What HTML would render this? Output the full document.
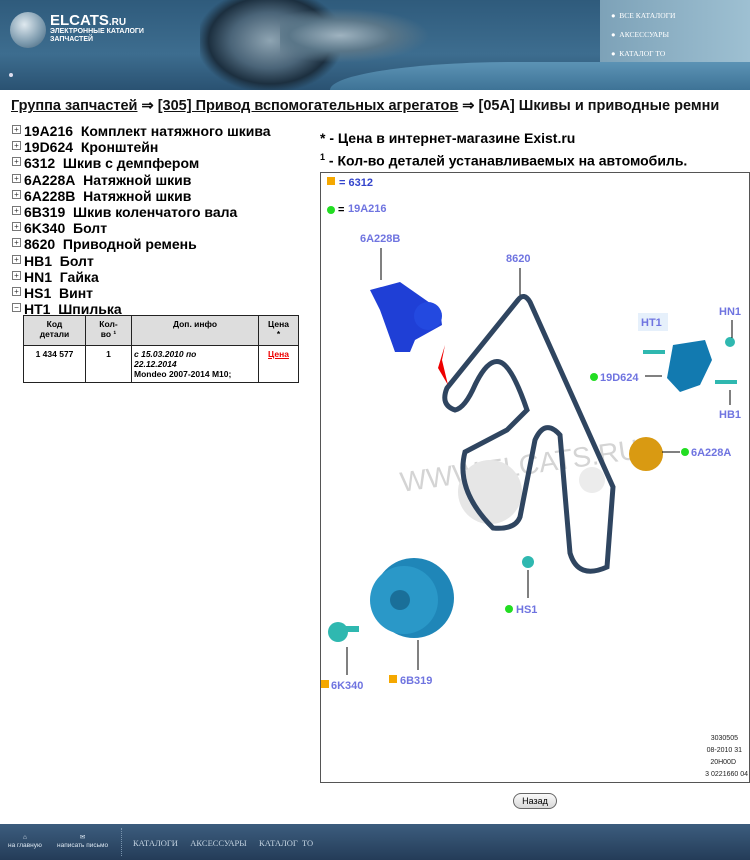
<!DOCTYPE html>
<html><head><meta charset="utf-8"><style>
body{margin:0;width:750px;height:860px;position:relative;font-family:"Liberation Sans",Arial,sans-serif;background:#fff;overflow:hidden}
.hdr{position:absolute;left:0;top:0;width:750px;height:90px;background:linear-gradient(180deg,#2f5b7c 0%,#3d6d8f 60%,#2a5272 100%)}
.a{position:absolute}
.bc{position:absolute;left:11px;top:98px;font-size:14.5px;font-weight:bold;color:#111;white-space:nowrap}
.bc u{text-decoration:underline}
.list{position:absolute;left:12px;top:123px;font-size:14px;font-weight:bold;line-height:16.2px}
.list div{white-space:nowrap}
.pl{display:inline-block;width:7px;height:7px;border:1px solid #777;font-size:8px;line-height:7px;text-align:center;vertical-align:top;margin-top:2px;margin-right:3px;color:#333;font-weight:normal}
table{position:absolute;left:23px;top:315px;border-collapse:collapse;font-size:8.5px;font-weight:bold}
td{border:1px solid #222;text-align:center;vertical-align:top;padding:3px 2px}
.ft{position:absolute;left:0;top:824px;width:750px;height:36px;background:linear-gradient(180deg,#3c5d7e,#243c58)}
.lbl{font-family:"Liberation Sans",Arial,sans-serif;font-size:11px;fill:#6f74e0;font-weight:bold}
</style></head><body>
<div class="hdr">
 <div class="a" style="left:200px;top:0;width:140px;height:90px;background:radial-gradient(ellipse at 50% 45%,#8ea4b2 0%,#4a6478 40%,#1c2f3f 62%,rgba(30,50,70,0) 75%)"></div>
 <div class="a" style="left:280px;top:8px;width:150px;height:55px;background:radial-gradient(ellipse at 40% 50%,#9fb3c0 0%,#5a7688 40%,rgba(60,100,130,0) 70%)"></div>
 <div class="a" style="left:330px;top:62px;width:420px;height:28px;background:linear-gradient(180deg,#5c93b5,#3e7396);border-top-left-radius:200px 30px"></div>
 <div class="a" style="left:600px;top:0;width:150px;height:62px;background:linear-gradient(90deg,#7da2b8,#9ec0d2)"></div>
 <div class="a" style="left:10px;top:12px;width:36px;height:36px;border-radius:50%;background:radial-gradient(circle at 40% 35%,#dfe9ef,#7a98ac 60%,#3d5d75)"></div>
 <div class="a" style="left:50px;top:12px;color:#fff;font-weight:bold;font-size:15px">ELCATS<span style="font-size:10px">.RU</span></div>
 <div class="a" style="left:50px;top:28px;color:#fff;font-weight:bold;font-size:7px;line-height:8px">ЭЛЕКТРОННЫЕ КАТАЛОГИ<br>ЗАПЧАСТЕЙ</div>
 <div class="a" style="left:9px;top:73px;width:4px;height:4px;border-radius:50%;background:#dde"></div>
 <div class="a" style="left:611px;top:6px;color:#fff;font-family:'Liberation Serif',serif;font-size:7.5px;line-height:19px">● &nbsp;ВСЕ КАТАЛОГИ<br>● &nbsp;АКСЕССУАРЫ<br>● &nbsp;КАТАЛОГ ТО</div>
</div>
<div class="bc"><u>Группа запчастей</u> ⇒ <u>[305] Привод вспомогательных агрегатов</u> ⇒ [05A] Шкивы и приводные ремни</div>
<div class="list">
<div><span class="pl">+</span>19A216&nbsp; Комплект натяжного шкива</div>
<div><span class="pl">+</span>19D624&nbsp; Кронштейн</div>
<div><span class="pl">+</span>6312&nbsp; Шкив с демпфером</div>
<div><span class="pl">+</span>6A228A&nbsp; Натяжной шкив</div>
<div><span class="pl">+</span>6A228B&nbsp; Натяжной шкив</div>
<div><span class="pl">+</span>6B319&nbsp; Шкив коленчатого вала</div>
<div><span class="pl">+</span>6K340&nbsp; Болт</div>
<div><span class="pl">+</span>8620&nbsp; Приводной ремень</div>
<div><span class="pl">+</span>HB1&nbsp; Болт</div>
<div><span class="pl">+</span>HN1&nbsp; Гайка</div>
<div><span class="pl">+</span>HS1&nbsp; Винт</div>
<div><span class="pl">−</span><u>HT1&nbsp; Шпилька</u></div>
</div>
<table>
<tr style="background:#ddd;height:30px"><td style="width:57px">Код<br>детали</td><td style="width:41px">Кол-<br>во ¹</td><td style="width:122px">Доп. инфо</td><td style="width:35px">Цена<br>*</td></tr>
<tr style="height:37px"><td>1 434 577</td><td>1</td><td style="text-align:left"><i>с 15.03.2010 по<br>22.12.2014</i><br>Mondeo 2007-2014 M10;</td><td><u style="color:#e00">Цена</u></td></tr>
</table>
<div class="a" style="left:320px;top:130px;font-size:14px;font-weight:bold">* - Цена в интернет-магазине Exist.ru</div>
<div class="a" style="left:320px;top:152px;font-size:14px;font-weight:bold"><sup style="font-size:9px">1</sup> - Кол-во деталей устанавливаемых на автомобиль.</div>
<svg class="a" style="left:320px;top:172px" width="430" height="612" viewBox="320 172 430 612">
<rect x="320.5" y="172.5" width="429" height="610" fill="#fff" stroke="#555"/>
<rect x="327" y="177" width="8" height="8" fill="#f5a800"/><text x="339" y="186" font-size="11" font-weight="bold" fill="#3344cc" font-family="Liberation Sans">= 6312</text>
<circle cx="331" cy="210" r="4" fill="#22dd22"/><text x="338" y="213" font-size="11" font-weight="bold" font-family="Liberation Sans">=</text><text x="348" y="212" class="lbl">19A216</text>
<text x="360" y="242" class="lbl">6A228B</text><line x1="381" y1="248" x2="381" y2="280" stroke="#000"/>
<text x="506" y="262" class="lbl">8620</text><line x1="520" y1="268" x2="520" y2="298" stroke="#000"/>
<text x="400" y="492" font-size="28" fill="#d4d4d4" font-family="Liberation Sans" transform="rotate(-8 400 480)">WWW.ELCATS.RU</text>
<circle cx="490" cy="492" r="32" fill="#e6e6e6"/><circle cx="592" cy="480" r="13" fill="#ececec"/>
<path d="M518 300 L447 388 Q440 405 455 410 Q465 408 475 385 Q488 358 500 362 Q512 366 527 410 L507 430 L465 452 Q455 490 493 528 Q515 530 520 517 L535 440 Q545 418 560 435 L570 553 Q578 580 607 567 L613 487 L530 302 Q524 292 518 300 Z" fill="none" stroke="#2f4560" stroke-width="5"/>
<path d="M370 290 L400 282 L440 310 L442 325 L415 340 L410 352 L395 352 L380 310 Z" fill="#1f3fd6"/>
<circle cx="428" cy="316" r="14" fill="#2349e0"/>
<path d="M445 345 L438 368 L448 385 L442 360 Z" fill="#e00"/>
<circle cx="414" cy="598" r="40" fill="#1f86b8"/><circle cx="404" cy="600" r="34" fill="#2a98c8"/><circle cx="400" cy="600" r="10" fill="#1a6f99"/>
<circle cx="338" cy="632" r="10" fill="#2fb8b0"/><rect x="345" y="626" width="14" height="6" fill="#2fb8b0"/>
<circle cx="646" cy="454" r="17" fill="#d99a12"/>
<path d="M673 345 L705 340 L712 360 L700 385 L680 392 L667 378 Z" fill="#127ab0"/>
<rect x="643" y="350" width="22" height="4" fill="#2fb8b0"/><circle cx="730" cy="342" r="5" fill="#2fb8b0"/>
<rect x="715" y="380" width="22" height="4" fill="#2fb8b0"/>
<circle cx="528" cy="562" r="6" fill="#2fb8b0"/>
<rect x="638" y="313" width="30" height="18" fill="#e6f0fb"/><text x="641" y="326" class="lbl">HT1</text>
<text x="719" y="315" class="lbl">HN1</text><line x1="732" y1="320" x2="732" y2="338" stroke="#000"/>
<circle cx="594" cy="377" r="4" fill="#22dd22"/><text x="600" y="381" class="lbl">19D624</text><line x1="645" y1="376" x2="662" y2="376" stroke="#000"/>
<text x="719" y="418" class="lbl">HB1</text><line x1="730" y1="390" x2="730" y2="405" stroke="#000"/>
<circle cx="685" cy="452" r="4" fill="#22dd22"/><text x="691" y="456" class="lbl">6A228A</text><line x1="662" y1="452" x2="680" y2="452" stroke="#000"/>
<circle cx="509" cy="609" r="4" fill="#22dd22"/><text x="516" y="613" class="lbl">HS1</text><line x1="528" y1="570" x2="528" y2="598" stroke="#000"/>
<rect x="321" y="680" width="8" height="8" fill="#f5a800"/><text x="331" y="689" class="lbl">6K340</text><line x1="347" y1="647" x2="347" y2="675" stroke="#000"/>
<rect x="389" y="675" width="8" height="8" fill="#f5a800"/><text x="400" y="684" class="lbl">6B319</text><line x1="418" y1="640" x2="418" y2="670" stroke="#000"/>
<g font-size="7" font-family="Liberation Sans" fill="#222" text-anchor="end"><text x="738" y="740">3030505</text><text x="742" y="752">08-2010 31</text><text x="736" y="764">20H00D</text><text x="748" y="776">3 0221660 04</text></g>
</svg>
<div class="a" style="left:513px;top:793px;width:42px;height:14px;border:1px solid #666;border-radius:8px;background:linear-gradient(#fafafa,#d8d8d8);font-size:9px;text-align:center;line-height:14px">Назад</div>
<div class="ft">
 <div class="a" style="left:8px;top:10px;color:#dde8f2;font-size:6.5px;text-align:center;line-height:8px">⌂<br>на главную</div>
 <div class="a" style="left:57px;top:10px;color:#dde8f2;font-size:6.5px;text-align:center;line-height:8px">✉<br>написать письмо</div>
 <div class="a" style="left:121px;top:4px;height:28px;border-left:1px dotted #7893ad"></div>
 <div class="a" style="left:133px;top:14px;color:#c3d2e0;font-family:'Liberation Serif',serif;font-size:8.5px;word-spacing:2px">КАТАЛОГИ &nbsp; АКСЕССУАРЫ &nbsp; КАТАЛОГ ТО</div>
</div>
</body></html>
